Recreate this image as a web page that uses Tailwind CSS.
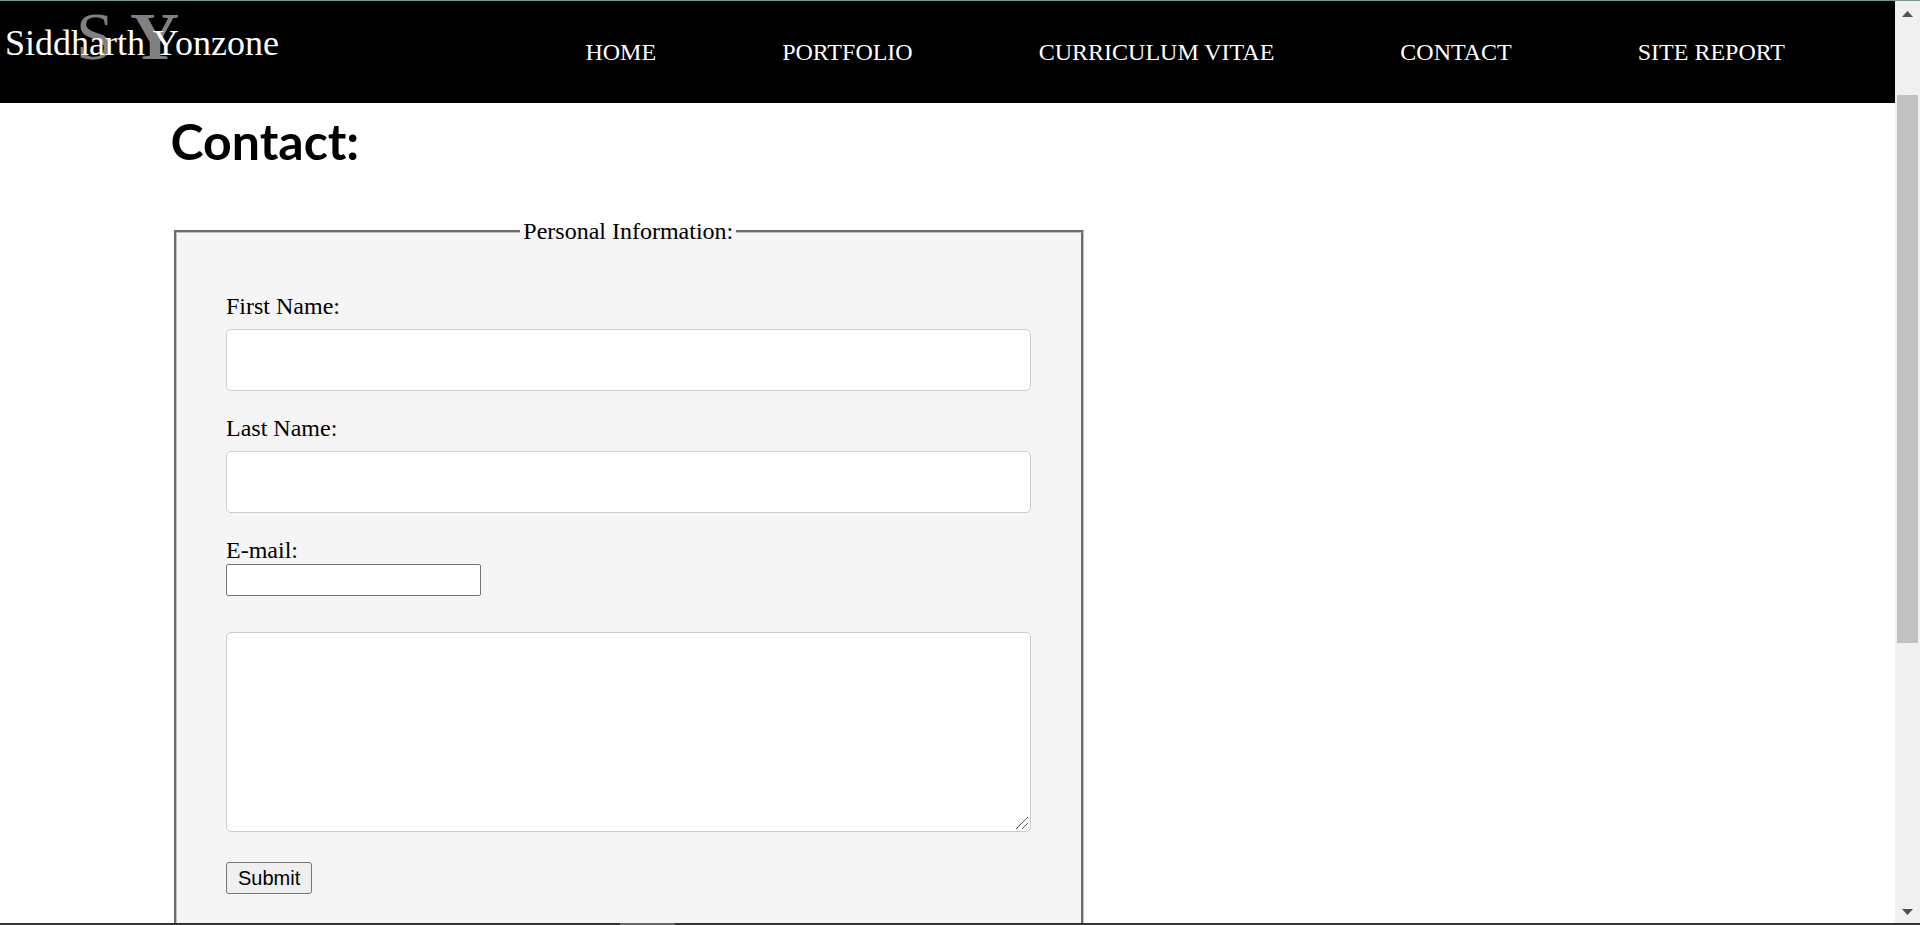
<!DOCTYPE html>
<html lang="en">
<head>
<meta charset="utf-8">
<meta name="viewport" content="width=device-width, initial-scale=1">
<title>Contact - Siddharth Yonzone</title>
<script src="https://cdn.jsdelivr.net/npm/@tailwindcss/browser@4"></script>
</head>
<body class="flex h-screen flex-col overflow-hidden border-t border-[#7a9a9a] bg-white font-['Liberation_Serif',serif] text-2xl/7 text-black">
  <div class="flex min-h-0 flex-1">
    <div class="min-w-0 flex-1 overflow-hidden">
      <header class="flex h-[102px] items-start justify-between bg-black text-white">
        <a href="#" aria-label="Siddharth Yonzone">
          <svg class="block" width="300" height="80" viewBox="0 0 300 80" aria-hidden="true">
            <g font-family="Liberation Serif, serif">
              <text x="76" y="58" font-size="68" fill="#808080">S</text>
              <text x="130" y="58" font-size="68" font-weight="bold" fill="#808080">Y</text>
              <text x="5" y="54" font-size="36" fill="#ffffff">Siddharth Yonzone</text>
            </g>
          </svg>
        </a>
        <nav class="flex gap-[126px] pt-[37px] pr-[110px] whitespace-nowrap">
          <a href="#">HOME</a>
          <a href="#">PORTFOLIO</a>
          <a href="#">CURRICULUM VITAE</a>
          <a href="#">CONTACT</a>
          <a href="#">SITE REPORT</a>
        </nav>
      </header>
      <main>
        <h1 class="mt-[9px] ml-[9%] font-['Comic_Sans_MS','Lato',sans-serif] text-[50px]/[58px] font-bold">Contact:</h1>
        <form>
          <fieldset class="mt-[47px] ml-[174px] w-[48%] border-[3px] border-[#c0c0c0] bg-[#f5f5f5] pt-[47px] pr-[50px] pb-12 pl-[49px] [border-style:groove]">
            <legend class="mx-auto px-[3px]">Personal Information:</legend>
            <label for="first" class="block">First Name:</label>
            <input id="first" type="text" class="mt-[9px] mb-[23px] block h-[62px] w-full rounded-[5px] border border-[#cccccc] bg-white px-4">
            <label for="last" class="block">Last Name:</label>
            <input id="last" type="text" class="mt-[9px] mb-[23px] block h-[62px] w-full rounded-[5px] border border-[#cccccc] bg-white px-4">
            <label for="email" class="block">E-mail:</label>
            <input id="email" type="email" class="block h-8 w-[255px] rounded-xs border border-[#767676] bg-white px-1">
            <div class="relative mt-9">
              <textarea aria-label="Message" class="block h-[200px] w-full resize-none rounded-[5px] border border-[#cccccc] bg-white p-4"></textarea>
              <svg class="pointer-events-none absolute right-[3px] bottom-[3px]" width="12" height="12" viewBox="0 0 12 12" fill="none" stroke="#555555" aria-hidden="true"><path d="M0 12 12 0M6 12 12 6"/></svg>
            </div>
            <button type="submit" class="mt-[30px] block h-8 rounded-[3px] border border-[#767676] bg-[#efefef] px-[11px] font-['Liberation_Sans',sans-serif] text-xl/7">Submit</button>
          </fieldset>
        </form>
      </main>
    </div>
    <div class="flex w-[25px] shrink-0 flex-col items-center bg-[#f0f0f0] pt-[10px] pb-2" aria-hidden="true">
      <svg class="shrink-0" width="11" height="6" viewBox="0 0 11 6"><path d="M0 6 5.500 0 11 6Z" fill="#505050"/></svg>
      <div class="mt-[78px] h-[548px] w-[21px] bg-[#c1c1c1]"></div>
      <svg class="mt-auto shrink-0" width="11" height="6" viewBox="0 0 11 6"><path d="M0 0 5.500 6 11 0Z" fill="#505050"/></svg>
    </div>
  </div>
  <div class="flex h-[2px] shrink-0 bg-[#333333] pl-[620px]"><div class="w-[55px] bg-[#666666]"></div></div>
</body>
</html>
